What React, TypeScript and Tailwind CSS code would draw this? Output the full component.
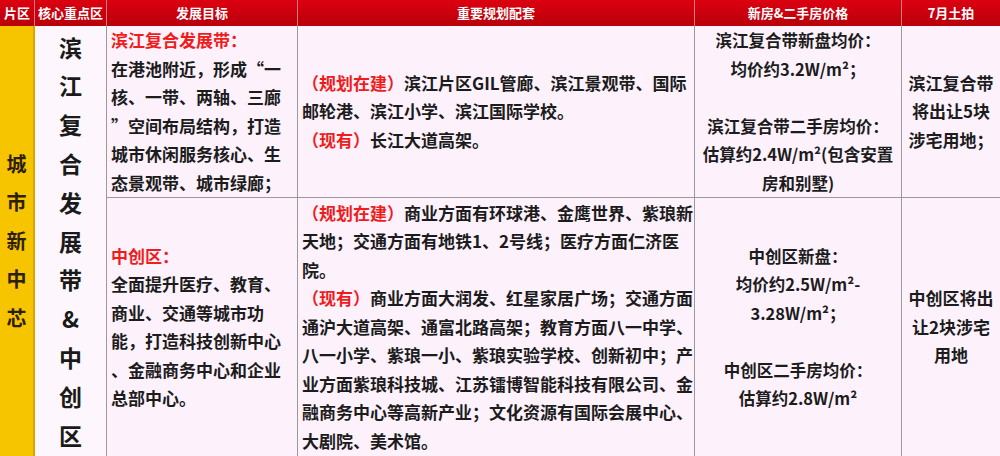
import React from "react";

const font = "font-['Noto_Sans_CJK_SC','Noto_Sans_CJK_TC',sans-serif]";

function Red({ children }: { children: React.ReactNode }) {
  return <span className="text-[#f01c1c]">{children}</span>;
}

function Lines({ lines }: { lines: React.ReactNode[] }) {
  return (
    <>
      {lines.map((l, i) => (
        <div key={i} className="whitespace-nowrap h-[28.5px]">
          {l}
        </div>
      ))}
    </>
  );
}

const headers = ["片区", "核心重点区", "发展目标", "重要规划配套", "新房&二手房价格", "7月土拍"];

export default function App() {
  return (
    <div
      className={`${font} w-[1000px] h-[456px] overflow-hidden grid grid-cols-[35px_72px_191px_397px_207px_98px] grid-rows-[26px_172px_258px] bg-[#fdf2fc] text-[#1c1c1c] font-bold`}
    >
      {headers.map((h, i) => (
        <div
          key={h}
          className={`flex items-center justify-center bg-gradient-to-b from-[#dc0010] to-[#b8000b] text-white text-[13px] whitespace-nowrap ${
            i < headers.length - 1 ? "border-r border-[#e37a7a]" : ""
          }`}
        >
          {h}
        </div>
      ))}

      {/* 片区 */}
      <div className="row-span-2 bg-[#f7c400] border-r-2 border-[#d9a600] flex flex-col items-center justify-center text-[20px] leading-[38.5px] text-[#2c2000]">
        {"城市新中芯".split("").map((c) => (
          <div key={c}>{c}</div>
        ))}
      </div>

      {/* 核心重点区 */}
      <div className="row-span-2 bg-[#fdf7fd] border-r border-[#9a9a9a] flex flex-col items-center justify-center text-[23px] leading-[38.8px] text-[#1a1a1a]">
        {"滨江复合发展带&中创区".split("").map((c, i) => (
          <div key={i}>{c}</div>
        ))}
      </div>

      {/* row 1 */}
      <div className="border-r border-b border-[#9a9a9a] px-[4px] text-[17px] leading-[28.5px]">
        <Lines
          lines={[
            <Red>滨江复合发展带：</Red>,
            "在港池附近，形成“一",
            "核、一带、两轴、三廊",
            "”空间布局结构，打造",
            "城市休闲服务核心、生",
            "态景观带、城市绿廊；",
          ]}
        />
      </div>
      <div className="border-r border-b border-[#9a9a9a] px-[4px] text-[17px] leading-[28.5px] flex flex-col justify-center">
        <Lines
          lines={[
            <>
              <Red>（规划在建）</Red>滨江片区GIL管廊、滨江景观带、国际
            </>,
            "邮轮港、滨江小学、滨江国际学校。",
            <>
              <Red>（现有）</Red>长江大道高架。
            </>,
          ]}
        />
      </div>
      <div className="border-r border-b border-[#9a9a9a] text-[16.5px] leading-[28.5px] flex flex-col justify-center items-center text-center">
        <Lines
          lines={[
            "滨江复合带新盘均价：",
            "均价约3.2W/m²；",
            "",
            "滨江复合带二手房均价：",
            "估算约2.4W/m²(包含安置",
            "房和别墅)",
          ]}
        />
      </div>
      <div className="border-b border-[#9a9a9a] text-[17px] leading-[28.5px] flex flex-col justify-center items-center text-center">
        <Lines lines={["滨江复合带", "将出让5块", "涉宅用地；"]} />
      </div>

      {/* row 2 */}
      <div className="border-r border-[#9a9a9a] px-[4px] text-[17px] leading-[28.5px] flex flex-col justify-center">
        <Lines
          lines={[
            <Red>中创区：</Red>,
            "全面提升医疗、教育、",
            "商业、交通等城市功",
            "能，打造科技创新中心",
            "、金融商务中心和企业",
            "总部中心。",
          ]}
        />
      </div>
      <div className="border-r border-[#9a9a9a] px-[4px] text-[17px] leading-[28.5px] flex flex-col justify-center">
        <Lines
          lines={[
            <>
              <Red>（规划在建）</Red>商业方面有环球港、金鹰世界、紫琅新
            </>,
            "天地；交通方面有地铁1、2号线；医疗方面仁济医",
            "院。",
            <>
              <Red>（现有）</Red>商业方面大润发、红星家居广场；交通方面
            </>,
            "通沪大道高架、通富北路高架；教育方面八一中学、",
            "八一小学、紫琅一小、紫琅实验学校、创新初中；产",
            "业方面紫琅科技城、江苏镭博智能科技有限公司、金",
            "融商务中心等高新产业；文化资源有国际会展中心、",
            "大剧院、美术馆。",
          ]}
        />
      </div>
      <div className="border-r border-[#9a9a9a] text-[16.5px] leading-[28.5px] flex flex-col justify-center items-center text-center">
        <Lines
          lines={[
            "中创区新盘：",
            "均价约2.5W/m²-",
            "3.28W/m²；",
            "",
            "中创区二手房均价：",
            "估算约2.8W/m²",
          ]}
        />
      </div>
      <div className="text-[17px] leading-[28.5px] flex flex-col justify-center items-center text-center">
        <Lines lines={["中创区将出", "让2块涉宅", "用地"]} />
      </div>
    </div>
  );
}
